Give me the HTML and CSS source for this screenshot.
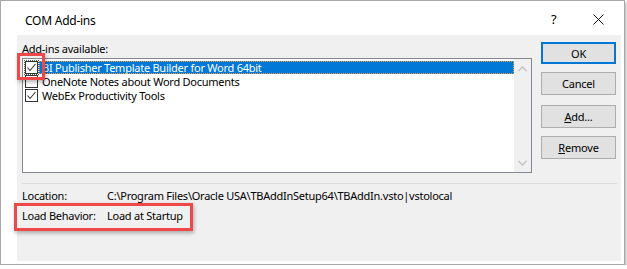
FILE: index.html
```html
<!DOCTYPE html>
<html lang="en">

<head>
    <meta charset="utf-8">
    <title>COM Add-ins</title>
    <link rel="stylesheet" href="styles.css">
</head>

<body>

    <div class="vindue">
        <div class="titellinje">
            <span class="titel">COM Add-ins</span>
            <span class="hjaelp">?</span>
            <span class="luk">
                <svg width="11" height="11" viewBox="0 0 11 11">
                    <path d="M0.5 0.5 L10.5 10.5 M10.5 0.5 L0.5 10.5" stroke="#111" stroke-width="1" fill="none" />
                </svg>
            </span>
        </div>

        <div class="indhold">
            <div class="hoved">
                <div class="venstre">
                    <div class="etiket">Add-ins available:</div>
                    <div class="liste">
                        <div class="raekker">
                            <div class="raekke valgt">
                                <span class="boks fokus"><svg width="11" height="11" viewBox="0 0 11 11"><path d="M1.5 5.5 L4 8.5 L9.5 2" stroke="#333" stroke-width="1.1" fill="none" /></svg></span>
                                <span class="navn">BI Publisher Template Builder for Word 64bit</span>
                            </div>
                            <div class="raekke">
                                <span class="boks"></span>
                                <span class="navn">OneNote Notes about Word Documents</span>
                            </div>
                            <div class="raekke">
                                <span class="boks"><svg width="11" height="11" viewBox="0 0 11 11"><path d="M1.5 5.5 L4 8.5 L9.5 2" stroke="#333" stroke-width="1.1" fill="none" /></svg></span>
                                <span class="navn">WebEx Productivity Tools</span>
                            </div>
                        </div>
                        <div class="rullebjaelke">
                            <svg width="9" height="6" viewBox="0 0 9 6"><path d="M0.5 5 L4.5 1 L8.5 5" stroke="#c2c2c2" stroke-width="1.4" fill="none" /></svg>
                            <svg width="9" height="6" viewBox="0 0 9 6"><path d="M0.5 1 L4.5 5 L8.5 1" stroke="#c2c2c2" stroke-width="1.4" fill="none" /></svg>
                        </div>
                    </div>
                    <div class="markering boksmarkering"></div>
                </div>

                <div class="knapper">
                    <button class="knap standard">OK</button>
                    <button class="knap">Cancel</button>
                    <button class="knap luft"><u>A</u>dd...</button>
                    <button class="knap"><u>R</u>emove</button>
                </div>
            </div>

            <div class="skillelinje"></div>

            <div class="info">
                <div class="inforaekke">
                    <span class="infonavn">Location:</span>
                    <span>C:\Program Files\Oracle USA\TBAddInSetup64\TBAddIn.vsto|vstolocal</span>
                </div>
                <div class="inforaekke">
                    <span class="infonavn">Load Behavior:</span>
                    <span>Load at Startup</span>
                    <div class="markering adfaerdmarkering"></div>
                </div>
            </div>
        </div>
    </div>

</body>

</html>
```

FILE: styles.css
```css
body {
    margin: 0;
    background-color: #fff;
    font-family: "Segoe UI", "Noto Sans", sans-serif;
    font-size: 11px;
    letter-spacing: -0.25px;
    color: #000;
}

.vindue {
    width: 623px;
    height: 263px;
    border: 1px solid #a8a8a8;
    background-color: #fff;
    box-shadow: 1px 2px 3px rgba(0, 0, 0, 0.35);
    display: flex;
    flex-direction: column;
}

.titellinje {
    height: 34px;
    display: flex;
    align-items: center;
    padding-left: 24px;
    font-size: 12px;
}

.titel {
    flex: 1;
    padding-top: 4px;
}

.hjaelp {
    width: 42px;
    font-size: 13px;
    padding-top: 2px;
}

.luk {
    width: 31px;
    padding-top: 4px;
}

.indhold {
    margin: 0 3px 3px 16px;
    flex: 1;
    background-color: #f0f0f0;
    padding: 6px 5px 0 5px;
}

.hoved {
    display: flex;
    gap: 9px;
}

.venstre {
    position: relative;
    flex: 1;
}

.etiket {
    height: 17px;
    line-height: 15px;
}

.liste {
    height: 113px;
    border: 1px solid #828790;
    background-color: #fff;
    display: flex;
}

.raekker {
    flex: 1;
    padding-top: 1px;
}

.raekke {
    height: 14px;
    display: flex;
    align-items: center;
    line-height: 13px;
}

.boks {
    width: 11px;
    height: 11px;
    border: 1px solid #333;
    margin-left: 2px;
    margin-right: 1px;
    display: flex;
}

.boks.fokus {
    outline: 1px dotted #555;
    outline-offset: 0;
}

.navn {
    flex: 1;
    padding-left: 3px;
    height: 13px;
}

.valgt .navn {
    background-color: #0078d7;
    color: #fff;
    outline: 1px dotted #f4a13a;
    outline-offset: -1px;
}

.rullebjaelke {
    width: 17px;
    background-color: #f0f0f0;
    display: flex;
    flex-direction: column;
    justify-content: space-between;
    align-items: center;
    padding: 7px 0 6px;
}

.knapper {
    width: 75px;
    display: flex;
    flex-direction: column;
    gap: 8px;
    padding-top: 1px;
}

.knap {
    height: 23px;
    background-color: #e1e1e1;
    border: 1px solid #adadad;
    font-family: inherit;
    font-size: 11px;
    letter-spacing: -0.2px;
    color: #000;
    padding: 0;
}

.standard {
    border: 2px solid #0078d7;
    height: 22px;
}

.luft {
    margin-top: 2px;
}

.skillelinje {
    height: 1px;
    background-color: #dcdcdc;
    margin: 10px -1px 0 0;
}

.info {
    padding-top: 2px;
}

.inforaekke {
    position: relative;
    display: flex;
    height: 20px;
    line-height: 20px;
}

.infonavn {
    width: 85px;
}

.markering {
    position: absolute;
    border: 3px solid #ee4848;
    box-shadow: 1px 2px 4px rgba(0, 0, 0, 0.3);
}

.boksmarkering {
    left: -5px;
    top: 12px;
    width: 22px;
    height: 21px;
}

.adfaerdmarkering {
    left: -8px;
    top: -3px;
    width: 173px;
    height: 22px;
}
```
